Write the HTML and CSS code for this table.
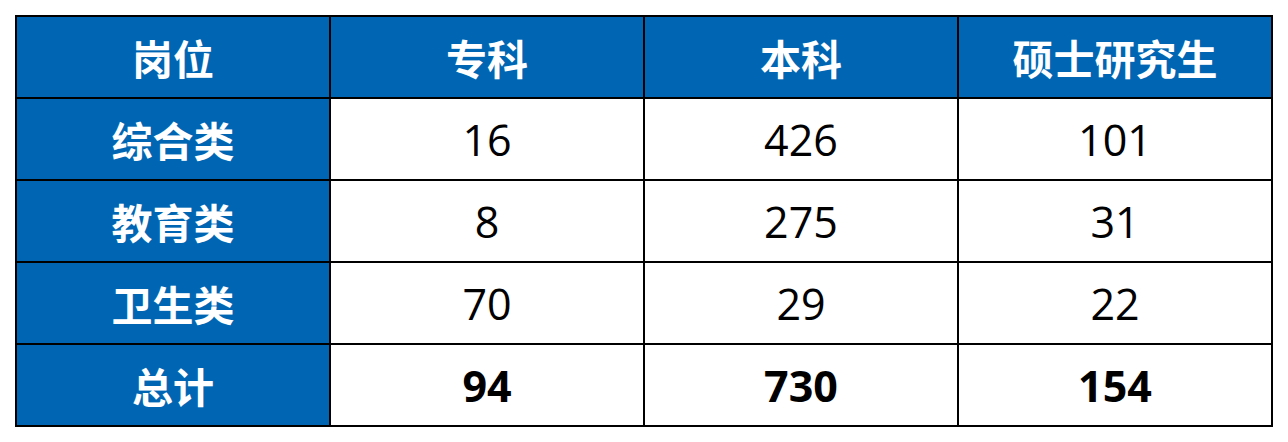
FILE: index.html
```html
<!DOCTYPE html>
<html>
<head>
<meta charset="utf-8">
<link rel="stylesheet" href="styles.css">
</head>
<body>
<table class="stats">
  <thead>
    <tr>
      <th>岗位</th>
      <th>专科</th>
      <th>本科</th>
      <th>硕士研究生</th>
    </tr>
  </thead>
  <tbody>
    <tr><th>综合类</th><td>16</td><td>426</td><td>101</td></tr>
    <tr><th>教育类</th><td>8</td><td>275</td><td>31</td></tr>
    <tr><th>卫生类</th><td>70</td><td>29</td><td>22</td></tr>
    <tr class="total"><th>总计</th><td>94</td><td>730</td><td>154</td></tr>
  </tbody>
</table>
</body>
</html>
```

FILE: styles.css
```css
html, body {
  margin: 0;
  padding: 0;
  background: #ffffff;
}
body {
  padding: 15px 0 0 15px;
}
.stats {
  border-collapse: collapse;
  table-layout: fixed;
  width: 1258px;
}
.stats th,
.stats td {
  border: 2px solid #000000;
  height: 82px;
  padding: 0;
  text-align: center;
  vertical-align: middle;
  box-sizing: border-box;
}
.stats th {
  background: #0066b3;
  color: #ffffff;
  font-family: "Noto Sans CJK SC", "Noto Sans", sans-serif;
  font-weight: 700;
  font-size: 41px;
  line-height: 1;
}
.stats td {
  background: #ffffff;
  color: #000000;
  font-family: "Open Sans", "Noto Sans", sans-serif;
  font-weight: 400;
  font-size: 43px;
  line-height: 1;
}
.stats .total td {
  font-weight: 700;
}
```
